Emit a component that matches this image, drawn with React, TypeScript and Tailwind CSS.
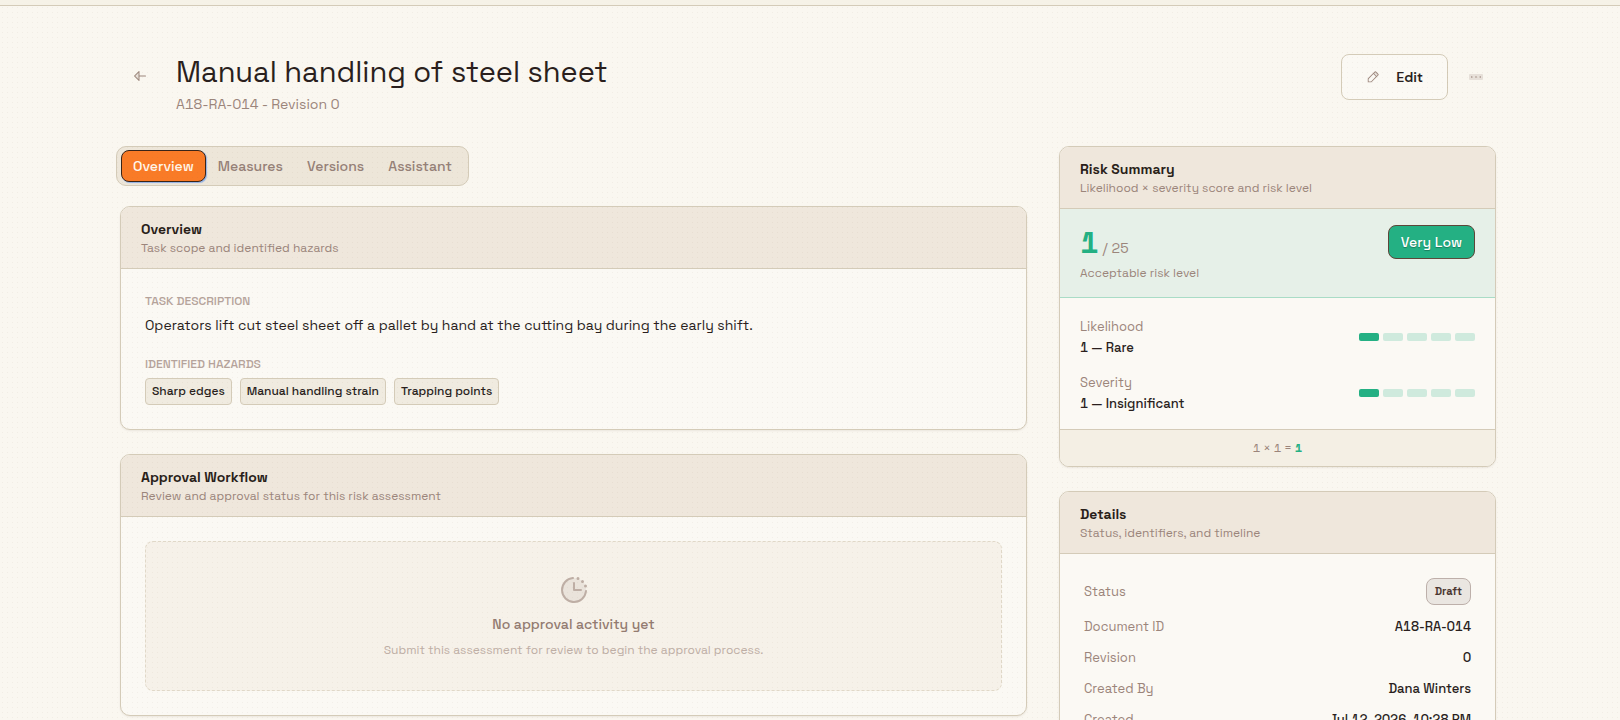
import type { ReactNode } from "react";
import {
  PiArrowLeftDuotone,
  PiClockCountdownDuotone,
  PiDotsThreeDuotone,
  PiPencilSimpleDuotone,
} from "react-icons/pi";

const tabs = ["Overview", "Measures", "Versions", "Assistant"];
const hazards = ["Sharp edges", "Manual handling strain", "Trapping points"];
const factors = [
  { label: "Likelihood", value: "1 — Rare", score: 1 },
  { label: "Severity", value: "1 — Insignificant", score: 1 },
];
const details = [
  ["Document ID", "A18-RA-014"],
  ["Revision", "0"],
  ["Created By", "Dana Winters"],
  ["Created", "Jul 12, 2026, 10:28 PM"],
];

function Card({ title, subtitle, children }: { title: string; subtitle: string; children: ReactNode }) {
  return (
    <section className="overflow-hidden rounded-[10px] border border-[#d4cbb8] bg-[#fbf9f4] shadow-[0_1px_2px_rgba(60,40,20,0.08)]">
      <header className="border-b border-[#d4cbb8] bg-[#efe7dc] px-5 py-3">
        <h2 className="text-sm leading-[21px] font-semibold text-[#2a1f1a]">{title}</h2>
        <p className="text-xs leading-4 text-[#9b857b]">{subtitle}</p>
      </header>
      {children}
    </section>
  );
}

function Meter({ score }: { score: number }) {
  return (
    <div className="flex gap-1" role="img" aria-label={`${score} of 5`}>
      {[1, 2, 3, 4, 5].map((n) => (
        <span key={n} className={n <= score ? "h-2 w-5 rounded-xs bg-[#24b083]" : "h-2 w-5 rounded-xs bg-[#cfeadd]"} />
      ))}
    </div>
  );
}

export default function App() {
  return (
    <div className="relative min-h-screen bg-[#faf7f0] font-['Space_Grotesk','Inter',sans-serif] text-[#2a1f1d] tabular-nums">
      <div className="relative z-10 h-1.5 border-b border-[#d4cbb8] bg-[#f6f2e7]" />
      <main className="mx-auto max-w-[1424px] pt-12 pr-[26px] pb-6 pl-[22px]">
        <div className="flex h-[68px] items-start justify-between">
          <div className="flex items-start">
            <button aria-label="Back" className="mt-1 flex h-9 w-10 items-center justify-center text-[#9b857b]">
              <PiArrowLeftDuotone size={16} />
            </button>
            <div className="ml-4">
              <h1 className="text-[29px] leading-9">Manual handling of steel sheet</h1>
              <p className="mt-1 text-sm leading-5 text-[#9b857b]">A18-RA-014 - Revision 0</p>
            </div>
          </div>
          <div className="flex items-center gap-2">
            <button className="flex h-[46px] w-[107px] items-center justify-center gap-4 rounded-lg border border-[#d4cbb8] bg-[#fbf9f4] font-['DM_Sans','Lato',sans-serif] text-sm font-semibold">
              <PiPencilSimpleDuotone size={14} className="text-[#9b857b]" />
              Edit
            </button>
            <button aria-label="More actions" className="flex h-9 w-10 items-center justify-center text-[#9b857b]">
              <PiDotsThreeDuotone size={16} />
            </button>
          </div>
        </div>

        <div className="mt-6 flex items-start gap-8">
          <div className="min-w-0 flex-1">
            <nav role="tablist" className="-ml-1 flex h-10 w-[353px] items-center rounded-[10px] border border-[#d4cbb8] bg-[#ede6d9] px-1">
              {tabs.map((tab, i) => (
                <button
                  key={tab}
                  role="tab"
                  aria-selected={i === 0}
                  className={
                    i === 0
                      ? "h-8 rounded-lg border border-[#3a2418] bg-[#f97b27] px-[11px] text-sm font-medium text-[#fff6ea] shadow-[1px_1px_1px_#8fb0e6]"
                      : "h-8 flex-auto text-center text-sm font-medium text-[#958077]"
                  }
                >
                  {tab}
                </button>
              ))}
            </nav>

            <div className="mt-5 flex flex-col gap-6">
              <Card title="Overview" subtitle="Task scope and identified hazards">
                <div className="p-6">
                  <h3 className="text-xs leading-4 font-medium text-[#b5a39b] uppercase">Task description</h3>
                  <p className="mt-1.5 text-sm leading-[21px]">
                    Operators lift cut steel sheet off a pallet by hand at the cutting bay during the early shift.
                  </p>
                  <h3 className="mt-5 text-xs leading-4 font-medium text-[#b5a39b] uppercase">Identified hazards</h3>
                  <ul className="mt-1.5 flex gap-2">
                    {hazards.map((hazard) => (
                      <li key={hazard} className="rounded-sm border border-[#d4cbb8] bg-[#f0ebe0] px-1.5 text-xs leading-[25px] font-medium">
                        {hazard}
                      </li>
                    ))}
                  </ul>
                </div>
              </Card>
              <Card title="Approval Workflow" subtitle="Review and approval status for this risk assessment">
                <div className="p-6">
                  <div className="flex flex-col items-center rounded-lg border border-dashed border-[#e0d8c8] bg-[#f6f1e9] py-8">
                    <PiClockCountdownDuotone size={32} className="text-[#beaea5]" />
                    <p className="mt-2 text-sm leading-5 font-medium text-[#937b71]">No approval activity yet</p>
                    <p className="mt-2 text-xs leading-4 text-[#beaea5]">Submit this assessment for review to begin the approval process.</p>
                  </div>
                </div>
              </Card>
            </div>
          </div>

          <aside className="relative z-10 flex w-[437px] shrink-0 flex-col gap-6">
            <Card title="Risk Summary" subtitle="Likelihood × severity score and risk level">
              <div className="flex items-start justify-between border-b border-[#a9dcc6] bg-[#e6f0e8] px-5 py-4">
                <div>
                  <p className="flex items-baseline gap-1 leading-9">
                    <strong className="text-[30px] font-bold text-[#24b083]">1</strong>
                    <span className="text-sm text-[#9b857b]">/ 25</span>
                  </p>
                  <p className="mt-1 text-xs leading-4 text-[#9b857b]">Acceptable risk level</p>
                </div>
                <span className="rounded-lg border border-[#5d4639] bg-[#24b083] px-3 text-sm leading-8 font-medium text-white [text-shadow:0_1px_1px_rgba(0,0,0,0.3)]">
                  Very Low
                </span>
              </div>
              <div className="flex flex-col gap-3.5 px-5 pt-4.5 pb-[15px]">
                {factors.map((factor) => (
                  <div key={factor.label} className="flex items-center justify-between">
                    <dl className="text-[13px] leading-[21px]">
                      <dt className="text-[#9b857b]">{factor.label}</dt>
                      <dd className="font-medium">{factor.value}</dd>
                    </dl>
                    <Meter score={factor.score} />
                  </div>
                ))}
              </div>
              <p className="border-t border-[#d4cbb8] bg-[#f4efe4] text-center text-xs leading-9 text-[#9b857b]">
                1 × 1 = <strong className="text-[#24b083]">1</strong>
              </p>
            </Card>
            <Card title="Details" subtitle="Status, identifiers, and timeline">
              <dl className="flex flex-col gap-3 p-6 text-[13px]">
                <div className="flex items-center justify-between">
                  <dt className="text-[#9b857b]">Status</dt>
                  <dd className="rounded-lg border border-[#bdb0aa] bg-[#eae6e1] px-2 text-[11px] leading-[25px] font-semibold text-[#4a3731]">Draft</dd>
                </div>
                {details.map(([label, value]) => (
                  <div key={label} className="flex items-center justify-between leading-[19px]">
                    <dt className="text-[#9b857b]">{label}</dt>
                    <dd className="font-medium">{value}</dd>
                  </div>
                ))}
              </dl>
            </Card>
          </aside>
        </div>
      </main>
      <div className="pointer-events-none absolute inset-0 bg-[radial-gradient(circle,rgba(120,90,60,0.06)_0.5px,transparent_1px)] bg-size-[5px_5px]" />
    </div>
  );
}
